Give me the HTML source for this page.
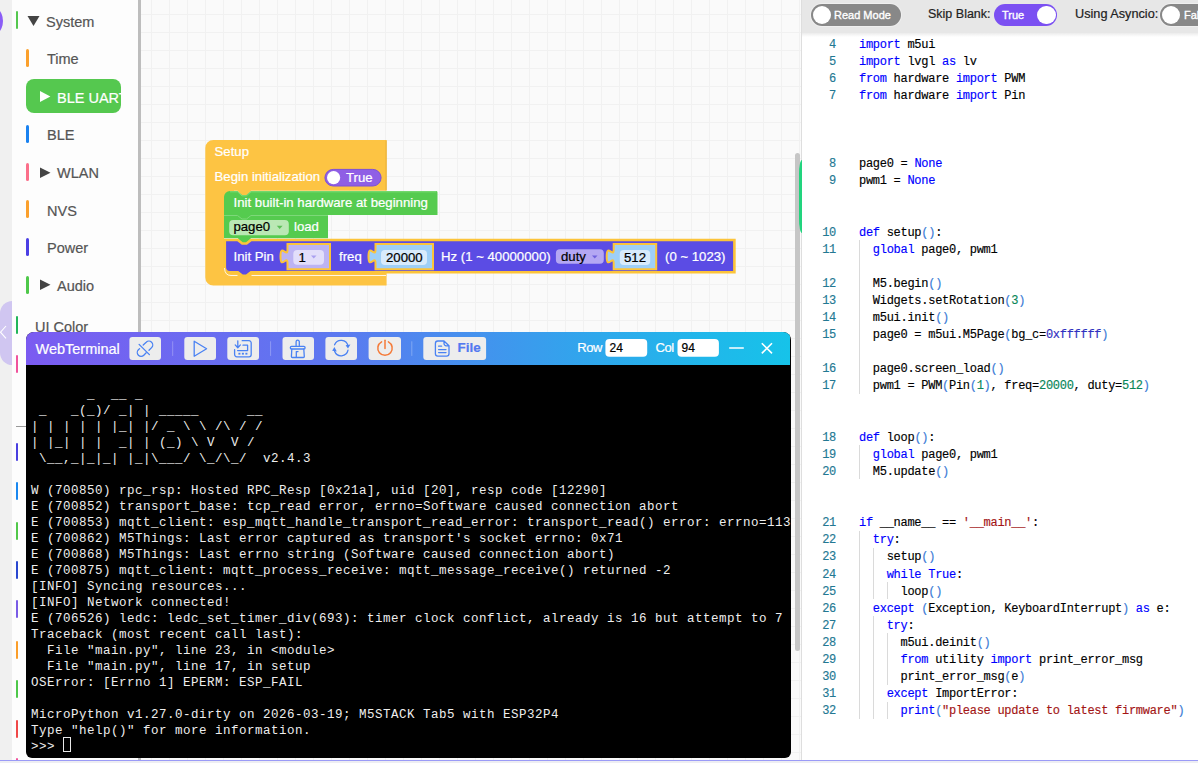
<!DOCTYPE html>
<html><head><meta charset="utf-8">
<style>
*{margin:0;padding:0;box-sizing:border-box}
html,body{width:1198px;height:763px;overflow:hidden;background:#f0f0f0;font-family:"Liberation Sans",sans-serif;position:relative;-webkit-text-stroke:0.2px currentColor}
.abs{position:absolute}
#side{left:12px;top:0;width:126px;height:760px;background:#fdfdfd}
#sideborder{left:138px;top:0;width:3px;height:760px;background:#bdbdbd}
#ws{left:141px;top:0;width:661px;height:760px;background:#fafafa;
 background-image:linear-gradient(to right,#f1f1f1 1px,transparent 1px),linear-gradient(to bottom,#f1f1f1 1px,transparent 1px);
 background-size:18px 18px;background-position:10px 14px}
.it{position:absolute;font-size:14.5px;color:#555;line-height:16px;white-space:nowrap;-webkit-text-stroke:0.2px currentColor}
.bar{position:absolute;border-radius:2px}
#bottomline{left:0;top:760px;width:1198px;height:1px;background:#9b9bf7}
#bottomgray{left:0;top:761px;width:1198px;height:2px;background:#eeeef3}
#editor{left:801px;top:0;width:397px;height:760px;background:#fff;border-left:1px solid #dedede}
#tb{left:802px;top:0;width:396px;height:33px;background:#e7e7e7}
.code{position:absolute;left:802px;top:36.6px;width:396px;font-family:"Liberation Mono",monospace;font-size:12px;letter-spacing:-0.28px;line-height:17.1px;white-space:pre;color:#000;-webkit-text-stroke:0.15px currentColor}
.ln{display:inline-block;width:34px;text-align:right;color:#237893;margin-right:23px}
.k{color:#0000ff}.p{color:#3b7bd6}.n{color:#098658}.s{color:#a31515}.h{color:#3030c0}
#term{left:26.4px;top:332px;width:764.6px;height:426px;background:#000;border-radius:8px 8px 6px 6px;overflow:hidden}
#thead{left:0;top:0;width:764px;height:33px;background:linear-gradient(to right,#7b5bf1,#5d78f0 40%,#2ea8ec 75%,#16c3e9)}
.tbtn{position:absolute;top:5px;height:23px;width:32px;background:#ededed;border-radius:3px}
.tsep{position:absolute;top:9px;width:1px;height:15px;background:rgba(255,255,255,0.3)}
#tout{left:4.6px;top:0;font-family:"Liberation Mono",monospace;font-size:12.5px;letter-spacing:0.5px;line-height:16px;white-space:pre;color:#eeeeee;-webkit-text-stroke:0}
</style></head><body>
<div class="abs" style="left:-33.4px;top:3.1px;width:36.4px;height:36.4px;background:#8b5cf6;border-radius:50%"></div>
<div class="abs" style="left:-0.3px;top:301px;width:40px;height:64px;background:#d0c6f1;border-radius:12.3px"></div>
<svg class="abs" style="left:0;top:325px" width="8" height="16"><path d="M6 1 L0.5 7.2 L6 13.4" stroke="#fff" stroke-width="1.1" fill="none"/></svg>
<div class="abs" id="side"></div>



<!-- sidebar items -->
<div class="bar" style="left:16px;top:11px;width:2px;height:18px;background:#55c84f"></div>
<svg class="abs" style="left:27px;top:15px" width="13" height="12"><path d="M0.5 1 H12.5 L6.5 11 Z" fill="#444"/></svg>
<div class="it" style="left:46px;top:14px">System</div>
<div class="bar" style="left:26px;top:49px;width:3px;height:18px;background:#fba02c"></div>
<div class="it" style="left:47px;top:51px">Time</div>
<div class="abs" style="left:26px;top:79px;width:95px;height:34px;background:#55c84f;border-radius:8px;overflow:hidden">
 <svg class="abs" style="left:13.8px;top:11.5px" width="11" height="12"><path d="M0 0 L10.4 5.5 L0 11 Z" fill="#fff"/></svg>
 <div class="it" style="left:31px;top:11px;color:#fff">BLE UART</div>
</div>
<div class="bar" style="left:26px;top:125px;width:3px;height:18px;background:#1a82f0"></div>
<div class="it" style="left:47px;top:127px">BLE</div>
<div class="bar" style="left:26px;top:163px;width:3px;height:18px;background:#fb6f8a"></div>
<svg class="abs" style="left:40px;top:167px" width="11" height="12"><path d="M0 0.5 L10.5 5.75 L0 11 Z" fill="#444"/></svg>
<div class="it" style="left:57px;top:165px">WLAN</div>
<div class="bar" style="left:26px;top:200px;width:3px;height:18px;background:#fba02c"></div>
<div class="it" style="left:47px;top:203px">NVS</div>
<div class="bar" style="left:26px;top:238px;width:3px;height:18px;background:#4b3fe4"></div>
<div class="it" style="left:47px;top:239.5px">Power</div>
<div class="bar" style="left:26px;top:276px;width:3px;height:18px;background:#4ec84a"></div>
<svg class="abs" style="left:40px;top:279px" width="11" height="12"><path d="M0 0.5 L10.5 5.75 L0 11 Z" fill="#444"/></svg>
<div class="it" style="left:57px;top:278px">Audio</div>
<div class="bar" style="left:16px;top:316px;width:2px;height:18px;background:#22b55a"></div>
<div class="it" style="left:35px;top:319px">UI Color</div>
<div class="bar" style="left:16px;top:355px;width:2px;height:18px;background:#f0539c"></div>
<div class="abs" style="left:16px;top:426px;width:12px;height:1px;background:#999"></div>
<div class="bar" style="left:26px;top:393px;width:3px;height:18px;background:#4ec84a;opacity:0.6"></div>
<div class="bar" style="left:16px;top:443px;width:2px;height:18px;background:#4a3fe0"></div>
<div class="bar" style="left:16px;top:482px;width:2px;height:18px;background:#1a88f0"></div>
<div class="bar" style="left:16px;top:522px;width:2px;height:18px;background:#52c84a"></div>
<div class="bar" style="left:16px;top:561px;width:2px;height:18px;background:#2a48d0"></div>
<div class="bar" style="left:16px;top:600px;width:2px;height:18px;background:#7a5ce6"></div>
<div class="bar" style="left:16px;top:641px;width:2px;height:18px;background:#fb9e2a"></div>
<div class="bar" style="left:16px;top:680px;width:2px;height:18px;background:#4ec84a"></div>
<div class="bar" style="left:16px;top:720px;width:2px;height:18px;background:#f04848"></div>
<div class="bar" style="left:16px;top:758px;width:2px;height:18px;background:#f0539c"></div>
<div class="abs" id="sideborder"></div>
<div class="abs" id="ws"></div>
<svg class="abs" style="left:0;top:0;-webkit-text-stroke:0.2px currentColor" width="802" height="330" font-family="Liberation Sans, sans-serif" font-size="13.2">
 <!-- setup -->
 <path d="M205.3 148 A8 8 0 0 1 213.3 140 H386.6 V190.8 H251 L246.5 195.5 H242 L237.5 190.8 H224 V272 H386.6 V285.5 H213.3 A8 8 0 0 1 205.3 277.5 Z" fill="#fdc443"/>
 <rect x="222" y="258" width="20" height="18" fill="#fdc443"/>
 <rect x="222" y="189" width="12" height="12" fill="#fdc443"/>
 <path d="M386.1 140.5 V190.3" stroke="#e6ad35" stroke-width="1" fill="none"/>
 <text x="214.5" y="156" fill="#fff" stroke="#fff" stroke-width="0.22">Setup</text>
 <text x="214.5" y="181" fill="#fff" stroke="#fff" stroke-width="0.22">Begin initialization</text>
 <rect x="324.9" y="169.4" width="56.2" height="16.6" rx="8.3" fill="#8f5fe5" stroke="#7c50d8" stroke-width="1"/>
 <circle cx="333.6" cy="177.7" r="6.6" fill="#fff"/>
 <text x="346" y="181.6" fill="#fff" stroke="#fff" stroke-width="0.22">True</text>
 <!-- green blocks -->
 <path d="M224 197 A6 6 0 0 1 230 191 H237.5 L242 195 H246.5 L251 191 H436 A1.5 1.5 0 0 1 437.5 192.5 V215 H328 V238.3 H251 L246.5 243 H242.3 L237.8 238.3 H224 Z" fill="#55cb4f"/>
 <path d="M224 215.5 H237.5 L242 219 H246.5 L251 215.5 H328" stroke="#7dd879" stroke-width="1" fill="none"/>
 <path d="M230 191.8 H237.5 L242 195.8 H246.5 L251 191.8 H436" stroke="#7fdc7b" stroke-width="1" fill="none"/>
 <text x="233.6" y="207.4" fill="#fff" stroke="#fff" stroke-width="0.22">Init built-in hardware at beginning</text>
 <rect x="229.2" y="220.1" width="59.6" height="15.2" rx="4" fill="#bae8b4"/>
 <text x="233.4" y="231.2" fill="#000" stroke="#000" stroke-width="0.22">page0</text>
 <path d="M276.8 225.8 H282.6 L279.7 229 Z" fill="#5cbf57"/>
 <text x="294" y="231.2" fill="#fff" stroke="#fff" stroke-width="0.22">load</text>
 <!-- init pin -->
 <path d="M224.8 240 H237.8 L242.3 243.5 H246.5 L251 240 H734.4 V272.3 H251 L246.5 275.8 H242.3 L237.8 272.3 H229.8 A5 5 0 0 1 224.8 267.3 Z" fill="#5b4ce4" stroke="#fcc43a" stroke-width="2.6"/>
 <path d="M224.5 268 Q224.8 275.5 231 275.5 H237.5 M251.5 275.5 H386" stroke="#fff" stroke-width="1" fill="none" opacity="0.85"/>
 <text x="233.5" y="261" fill="#fff" stroke="#fff" stroke-width="0.22">Init Pin</text>
 <!-- pin shadow -->
 <path d="M287.5 244 H330 V269.2 H287.5 V263.2 c0,-9 -7,7.2 -7,-6.75 s7,2.25 7,-6.75 Z" fill="#bcb3f3" stroke="#fcc43a" stroke-width="2"/>
 <rect x="293.3" y="250" width="30.7" height="14.7" rx="4" fill="#e2defa"/>
 <text x="298.5" y="262" fill="#000" stroke="#000" stroke-width="0.22">1</text>
 <path d="M311 255.5 H316.5 L313.75 258.5 Z" fill="#a99ff0"/>
 <text x="339" y="261" fill="#fff" stroke="#fff" stroke-width="0.22">freq</text>
 <path d="M375.5 244 H433 V269.2 H375.5 V263.2 c0,-9 -7,7.2 -7,-6.75 s7,2.25 7,-6.75 Z" fill="#9ecff7" stroke="#fcc43a" stroke-width="2"/>
 <rect x="381" y="250" width="46" height="15" rx="4" fill="#d8ebfc"/>
 <text x="386" y="262" fill="#000" stroke="#000" stroke-width="0.22">20000</text>
 <text x="441" y="261" fill="#fff" stroke="#fff" stroke-width="0.22">Hz (1 ~ 40000000)</text>
 <rect x="555.9" y="249.2" width="47.9" height="14.5" rx="4" fill="#b4a7f3"/>
 <text x="561" y="261" fill="#000" stroke="#000" stroke-width="0.22">duty</text>
 <path d="M592 255.5 H597.5 L594.75 258.5 Z" fill="#6f60dd"/>
 <path d="M613.7 244 H656.2 V269.2 H613.7 V263.2 c0,-9 -7,7.2 -7,-6.75 s7,2.25 7,-6.75 Z" fill="#9ecff7" stroke="#fcc43a" stroke-width="2"/>
 <rect x="619.8" y="250" width="30.4" height="15" rx="4" fill="#d8ebfc"/>
 <text x="624" y="262" fill="#000" stroke="#000" stroke-width="0.22">512</text>
 <text x="665" y="261" fill="#fff" stroke="#fff" stroke-width="0.22">(0 ~ 1023)</text>
</svg>
<div class="abs" style="left:795px;top:153px;width:4.5px;height:498px;background:#c6c6c6;border-radius:3px"></div>



<div class="abs" id="editor"></div>
<div class="abs" id="tb"></div>
<div class="abs" style="left:802px;top:33px;width:396px;height:4px;background:linear-gradient(#ececec,#fff)"></div>
<div class="abs" style="left:799.2px;top:160px;width:3px;height:72.7px;background:#22d47e;border-radius:3px 0 0 3px / 14px 0 0 14px"></div>

<div class="abs" style="left:811px;top:3.9px;width:90px;height:21.9px;border-radius:11px;background:#888;box-shadow:0 0 0 1px #efefef"></div>
<div class="abs" style="left:813.1px;top:5.9px;width:18px;height:18px;border-radius:50%;background:#fff"></div>
<div class="abs" style="left:834px;top:8px;font-size:11px;line-height:14px;color:#fff;-webkit-text-stroke:0.35px #fff">Read Mode</div>
<div class="abs" style="left:928px;top:5.5px;font-size:12.5px;line-height:16px;color:#222">Skip Blank:</div>
<div class="abs" style="left:994px;top:4px;width:63px;height:22px;border-radius:11px;background:#7b50f2"></div>
<div class="abs" style="left:1037px;top:5.8px;width:18.5px;height:18.5px;border-radius:50%;background:#fff"></div>
<div class="abs" style="left:1002px;top:8px;font-size:11px;line-height:14px;color:#fff;-webkit-text-stroke:0.35px #fff">True</div>
<div class="abs" style="left:1075px;top:5.5px;font-size:12.7px;line-height:16px;color:#222">Using Asyncio:</div>
<div class="abs" style="left:1160px;top:3.9px;width:70px;height:21.9px;border-radius:11px;background:#888;box-shadow:0 0 0 1px #efefef"></div>
<div class="abs" style="left:1162.1px;top:5.9px;width:18px;height:18px;border-radius:50%;background:#fff"></div>
<div class="abs" style="left:1184px;top:8px;font-size:11px;line-height:14px;color:#fff;-webkit-text-stroke:0.35px #fff">False</div>
<div class="abs" style="left:859.0px;top:240.0px;width:1px;height:153.9px;background:#dadada"></div>
<div class="abs" style="left:859.0px;top:445.2px;width:1px;height:34.2px;background:#dadada"></div>
<div class="abs" style="left:859.0px;top:530.7px;width:1px;height:188.1px;background:#dadada"></div>
<div class="abs" style="left:872.8px;top:547.8px;width:1px;height:51.3px;background:#dadada"></div>
<div class="abs" style="left:872.8px;top:616.2px;width:1px;height:102.6px;background:#dadada"></div>
<div class="abs" style="left:886.7px;top:582.0px;width:1px;height:17.1px;background:#dadada"></div>
<div class="abs" style="left:886.7px;top:633.3px;width:1px;height:51.3px;background:#dadada"></div>
<div class="abs" style="left:886.7px;top:701.7px;width:1px;height:17.1px;background:#dadada"></div>
<div class="code"><div><span class="ln">4</span><span class="k">import</span> m5ui</div><div><span class="ln">5</span><span class="k">import</span> lvgl <span class="k">as</span> lv</div><div><span class="ln">6</span><span class="k">from</span> hardware <span class="k">import</span> PWM</div><div><span class="ln">7</span><span class="k">from</span> hardware <span class="k">import</span> Pin</div><div><span class="ln"></span></div><div><span class="ln"></span></div><div><span class="ln"></span></div><div><span class="ln">8</span>page0 = <span class="k">None</span></div><div><span class="ln">9</span>pwm1 = <span class="k">None</span></div><div><span class="ln"></span></div><div><span class="ln"></span></div><div><span class="ln">10</span><span class="k">def</span> setup<span class="p">()</span>:</div><div><span class="ln">11</span>  <span class="k">global</span> page0, pwm1</div><div><span class="ln"></span></div><div><span class="ln">12</span>  M5.begin<span class="p">()</span></div><div><span class="ln">13</span>  Widgets.setRotation<span class="p">(</span><span class="n">3</span><span class="p">)</span></div><div><span class="ln">14</span>  m5ui.init<span class="p">()</span></div><div><span class="ln">15</span>  page0 = m5ui.M5Page<span class="p">(</span>bg_c=<span class="h">0xffffff</span><span class="p">)</span></div><div><span class="ln"></span></div><div><span class="ln">16</span>  page0.screen_load<span class="p">()</span></div><div><span class="ln">17</span>  pwm1 = PWM<span class="p">(</span>Pin<span class="p">(</span><span class="n">1</span><span class="p">)</span>, freq=<span class="n">20000</span>, duty=<span class="n">512</span><span class="p">)</span></div><div><span class="ln"></span></div><div><span class="ln"></span></div><div><span class="ln">18</span><span class="k">def</span> loop<span class="p">()</span>:</div><div><span class="ln">19</span>  <span class="k">global</span> page0, pwm1</div><div><span class="ln">20</span>  M5.update<span class="p">()</span></div><div><span class="ln"></span></div><div><span class="ln"></span></div><div><span class="ln">21</span><span class="k">if</span> __name__ == <span class="s">'__main__'</span>:</div><div><span class="ln">22</span>  <span class="k">try</span>:</div><div><span class="ln">23</span>    setup<span class="p">()</span></div><div><span class="ln">24</span>    <span class="k">while</span> <span class="k">True</span>:</div><div><span class="ln">25</span>      loop<span class="p">()</span></div><div><span class="ln">26</span>  <span class="k">except</span> <span class="p">(</span>Exception, KeyboardInterrupt<span class="p">)</span> <span class="k">as</span> e:</div><div><span class="ln">27</span>    <span class="k">try</span>:</div><div><span class="ln">28</span>      m5ui.deinit<span class="p">()</span></div><div><span class="ln">29</span>      <span class="k">from</span> utility <span class="k">import</span> print_error_msg</div><div><span class="ln">30</span>      print_error_msg<span class="p">(</span>e<span class="p">)</span></div><div><span class="ln">31</span>    <span class="k">except</span> ImportError:</div><div><span class="ln">32</span>      <span class="k">print</span><span class="p">(</span><span class="s">"please update to latest firmware"</span><span class="p">)</span></div></div>


<div class="abs" id="term">
 <div class="abs" id="thead">
  <div class="abs" style="left:9.1px;top:8.5px;font-size:14.5px;line-height:16px;color:#fff">WebTerminal</div>
  <svg class="abs" style="left:0.6px;top:0" width="764" height="33">
   <g fill="#ededed">
    <rect x="102.4" y="5.1" width="31.6" height="22.8" rx="3"/>
    <rect x="157.3" y="5.1" width="31.7" height="22.8" rx="3"/>
    <rect x="200.3" y="5.1" width="31.7" height="22.8" rx="3"/>
    <rect x="255.5" y="5.1" width="31.5" height="22.8" rx="3"/>
    <rect x="298.4" y="5.1" width="31.6" height="22.8" rx="3"/>
    <rect x="341.6" y="5.1" width="32.4" height="22.8" rx="3"/>
    <rect x="396.3" y="5.1" width="62.8" height="22.8" rx="3"/>
   </g>
   <g stroke="rgba(255,255,255,0.28)" stroke-width="1">
    <path d="M145.7 9.3 V23.9 M243.6 9.3 V23.9 M384.8 9.3 V23.9"/>
   </g>
   <g fill="none" stroke="#4a82f3" stroke-width="1.3" stroke-linecap="round" stroke-linejoin="round">
    <!-- link broken -->
    <path d="M116.2 13.0 L119.2 10.2 A3.8 3.8 0 0 1 124.6 15.6 L122.0 18.2"/>
    <path d="M119.2 20.8 L116.8 23.2 A3.8 3.8 0 0 1 111.4 17.8 L112.6 16.6"/>
    <path d="M112.1 12.4 L122.4 22.6"/>
    <!-- play -->
    <path d="M167.2 9.2 L179.6 16.7 L167.2 24.2 Z"/>
    <!-- download -->
    <path d="M215.2 8.7 H222 A2.2 2.2 0 0 1 224.2 10.9 V22.6 A2.2 2.2 0 0 1 222 24.8 H209.8 A2.2 2.2 0 0 1 207.6 22.6 V17.6"/>
    <path d="M216 13.2 H220.6 V18.6 H210.6"/>
    <path d="M210.8 8.8 V15.6 M208.2 12.9 L210.8 15.7 L213.4 12.9"/>
    <!-- broom -->
    <path d="M269.1 13.6 V9.8 A1.6 1.6 0 0 1 272.3 9.8 V13.6"/>
    <path d="M264.6 14.4 H276.8 A1.3 1.3 0 0 1 276.8 17 H264.6 A1.3 1.3 0 0 1 264.6 14.4 Z"/>
    <path d="M264.8 17.2 L264.4 24.6 A0.9 0.9 0 0 0 265.3 25.5 H276.4 A0.9 0.9 0 0 0 277.3 24.6 L276.8 17.2"/>
    <path d="M269.3 25.3 V19.6 H271"/>
    <!-- refresh -->
    <path d="M307.6 12.8 A7 7 0 0 1 321 14"/>
    <path d="M321 18.2 A7 7 0 0 1 307.6 19.3"/>
   </g>
   <g fill="#4a82f3">
    <path d="M318.6 13.2 L323.4 12.4 L321 16.6 Z"/>
    <path d="M305.2 18.8 L309.8 19.6 L307.4 14.9 Z"/>
    <rect x="211.4" y="20.8" width="2" height="1.8"/>
    <rect x="214.9" y="20.8" width="2" height="1.8"/>
    <rect x="218.4" y="20.8" width="2" height="1.8"/>
   </g>
   <g fill="none" stroke="#f57a38" stroke-width="1.5" stroke-linecap="round">
    <path d="M361.4 9.8 A7.2 7.2 0 1 1 354.6 9.8"/>
    <path d="M358 8.2 V16.4"/>
   </g>
   <g fill="none" stroke="#4a82f3" stroke-width="1.3" stroke-linejoin="round" stroke-linecap="round">
    <path d="M417 9 H410.8 A2.4 2.4 0 0 0 408.4 11.4 V21.8 A2.4 2.4 0 0 0 410.8 24.2 H419.6 A2.4 2.4 0 0 0 422 21.8 V13.8 L417 9 V11.6 A2.2 2.2 0 0 0 419.2 13.8 H422"/>
    <path d="M411.6 14.2 H414.6 M411.6 17.6 H419 M411.6 20.6 H419"/>
   </g>
   <text x="430.6" y="20" font-family="Liberation Sans, sans-serif" font-size="13.4" font-weight="bold" fill="#5279f0" stroke="#5279f0" stroke-width="0.22">File</text>
   <text x="550.3" y="19.6" font-family="Liberation Sans, sans-serif" font-size="13" fill="#fff" letter-spacing="-0.4" stroke="#fff" stroke-width="0.22">Row</text>
   <rect x="578.4" y="7.1" width="41.8" height="17.6" rx="4" fill="#fff"/>
   <text x="582.6" y="19.6" font-family="Liberation Sans, sans-serif" font-size="12" fill="#000" stroke="#000" stroke-width="0.22">24</text>
   <text x="628.5" y="19.6" font-family="Liberation Sans, sans-serif" font-size="13" fill="#fff" letter-spacing="-0.4" stroke="#fff" stroke-width="0.22">Col</text>
   <rect x="650.5" y="7.1" width="41.4" height="17.6" rx="4" fill="#fff"/>
   <text x="654.5" y="19.6" font-family="Liberation Sans, sans-serif" font-size="12" fill="#000" stroke="#000" stroke-width="0.22">94</text>
   <path d="M702.2 16 H716.8" stroke="#fff" stroke-width="1.6"/>
   <path d="M734.8 11.2 L745 21.4 M745 11.2 L734.8 21.4" stroke="#fff" stroke-width="1.6"/>
  </svg>
 </div>
 <div class="abs" id="tout" style="top:55.4px">       _  __ _
 _   _(_)/ _| | _____      __
| | | | | |_| |/ _ \ \ /\ / /
| |_| | |  _| | (_) \ V  V /
 \__,_|_|_| |_|\___/ \_/\_/  v2.4.3

W (700850) rpc_rsp: Hosted RPC_Resp [0x21a], uid [20], resp code [12290]
E (700852) transport_base: tcp_read error, errno=Software caused connection abort
E (700853) mqtt_client: esp_mqtt_handle_transport_read_error: transport_read() error: errno=113
E (700862) M5Things: Last error captured as transport&#x27;s socket errno: 0x71
E (700868) M5Things: Last errno string (Software caused connection abort)
E (700875) mqtt_client: mqtt_process_receive: mqtt_message_receive() returned -2
[INFO] Syncing resources...
[INFO] Network connected!
E (706526) ledc: ledc_set_timer_div(693): timer clock conflict, already is 16 but attempt to 7
Traceback (most recent call last):
  File &quot;main.py&quot;, line 23, in &lt;module&gt;
  File &quot;main.py&quot;, line 17, in setup
OSError: [Errno 1] EPERM: ESP_FAIL

MicroPython v1.27.0-dirty on 2026-03-19; M5STACK Tab5 with ESP32P4
Type &quot;help()&quot; for more information.
&gt;&gt;&gt; </div>
</div>
<div class="abs" style="left:62.8px;top:737.3px;width:8.2px;height:15.2px;border:1px solid #e8e8e8"></div>
<div class="abs" id="bottomline"></div><div class="abs" id="bottomgray"></div>
</body></html>
